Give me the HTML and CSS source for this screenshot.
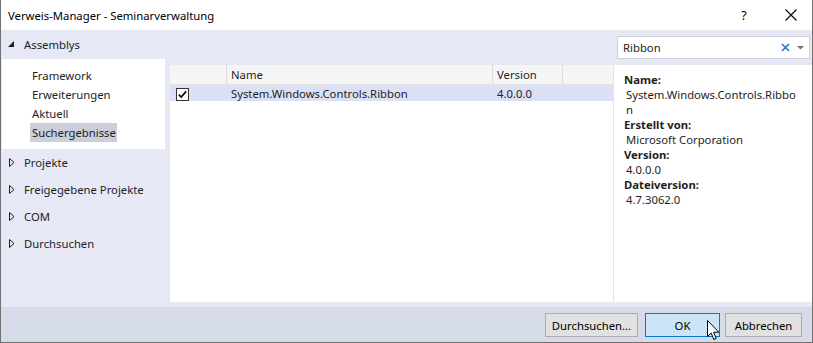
FILE: index.html
```html
<!DOCTYPE html>
<html lang="de">
<head>
<meta charset="utf-8">
<title>Verweis-Manager</title>
<link rel="stylesheet" href="styles.css">
</head>
<body>
<div class="window">
  <div class="titlebar">
    <span class="title">Verweis-Manager - Seminarverwaltung</span>
    <div class="title-btns">
      <span class="help">?</span>
      <svg class="close" width="12" height="12" viewBox="0 0 12 12"><path d="M0.5 0.5 L11.5 11.5 M11.5 0.5 L0.5 11.5" stroke="#000" stroke-width="1.1" fill="none"/></svg>
    </div>
  </div>
  <div class="main">
    <div class="top-row">
      <div class="node expanded">
        <svg class="tri" width="7" height="7" viewBox="0 0 7 7"><path d="M6 0 L6 6 L0 6 Z" fill="#1e1e1e"/></svg>
        <span>Assemblys</span>
      </div>
      <div class="search">
        <span class="search-text">Ribbon</span>
        <svg class="clear" width="9" height="9" viewBox="0 0 9 9"><path d="M1 1 L8 8 M8 1 L1 8" stroke="#1e72d6" stroke-width="1.6" fill="none"/></svg>
        <svg class="drop" width="7" height="4" viewBox="0 0 7 4"><path d="M0 0 L7 0 L3.5 3.5 Z" fill="#717171"/></svg>
      </div>
    </div>
    <div class="content">
      <div class="sidebar">
        <div class="subtree">
          <div class="sub-item">Framework</div>
          <div class="sub-item">Erweiterungen</div>
          <div class="sub-item">Aktuell</div>
          <div class="sub-item selected">Suchergebnisse</div>
        </div>
        <div class="node">
          <svg class="tri" width="6" height="9" viewBox="0 0 6 9"><path d="M0.5 0.5 L5 4.5 L0.5 8.5 Z" fill="none" stroke="#1e1e1e" stroke-width="1"/></svg>
          <span>Projekte</span>
        </div>
        <div class="node">
          <svg class="tri" width="6" height="9" viewBox="0 0 6 9"><path d="M0.5 0.5 L5 4.5 L0.5 8.5 Z" fill="none" stroke="#1e1e1e" stroke-width="1"/></svg>
          <span>Freigegebene Projekte</span>
        </div>
        <div class="node">
          <svg class="tri" width="6" height="9" viewBox="0 0 6 9"><path d="M0.5 0.5 L5 4.5 L0.5 8.5 Z" fill="none" stroke="#1e1e1e" stroke-width="1"/></svg>
          <span>COM</span>
        </div>
        <div class="node">
          <svg class="tri" width="6" height="9" viewBox="0 0 6 9"><path d="M0.5 0.5 L5 4.5 L0.5 8.5 Z" fill="none" stroke="#1e1e1e" stroke-width="1"/></svg>
          <span>Durchsuchen</span>
        </div>
      </div>
      <div class="panel">
        <div class="list">
          <div class="list-head">
            <div class="col c-check"></div>
            <div class="col c-name">Name</div>
            <div class="col c-ver">Version</div>
            <div class="col c-rest"></div>
          </div>
          <div class="list-row">
            <div class="col c-check">
              <svg class="checkbox" width="13" height="13" viewBox="0 0 13 13"><rect x="0.5" y="0.5" width="12" height="12" fill="#fff" stroke="#333"/><path d="M2.8 6.6 L5.2 9 L10.2 3.4" stroke="#000" stroke-width="1.6" fill="none"/></svg>
            </div>
            <div class="col c-name">System.Windows.Controls.Ribbon</div>
            <div class="col c-ver">4.0.0.0</div>
            <div class="col c-rest"></div>
          </div>
        </div>
        <div class="details">
          <div class="label">Name:</div>
          <div class="value">System.Windows.Controls.Ribbo<br>n</div>
          <div class="label">Erstellt von:</div>
          <div class="value">Microsoft Corporation</div>
          <div class="label">Version:</div>
          <div class="value">4.0.0.0</div>
          <div class="label">Dateiversion:</div>
          <div class="value">4.7.3062.0</div>
        </div>
      </div>
    </div>
  </div>
  <div class="footer">
    <button class="btn btn-browse">Durchsuchen...</button>
    <button class="btn btn-ok">OK</button>
    <button class="btn btn-cancel">Abbrechen</button>
  </div>
  <svg class="cursor" width="13" height="21" viewBox="0 0 13 21"><path d="M0.5 0.5 L0.5 16.5 L4.2 13 L6.8 19.5 L9.2 18.5 L6.6 12.2 L11.8 12.2 Z" fill="#fff" stroke="#000" stroke-width="1" stroke-linejoin="miter"/></svg>
</div>
</body>
</html>
```
FILE: styles.css
```css
* { box-sizing: border-box; }
html, body { margin: 0; padding: 0; background: #ffffff; }
body {
  font-family: "Noto Sans", "Open Sans", sans-serif;
  font-size: 11.3px;
  color: #1e1e1e;
  width: 813px;
  height: 343px;
  overflow: hidden;
}
.window {
  position: relative;
  width: 813px;
  height: 343px;
  border-left: 1px solid #707070;
  border-right: 1px solid #707070;
  border-bottom: 1px solid #707070;
  display: flex;
  flex-direction: column;
  background: #e6e9f5;
}
.titlebar {
  height: 30px;
  background: #ffffff;
  display: flex;
  align-items: center;
  justify-content: space-between;
  padding-left: 7px;
  flex: none;
}
.title { font-size: 11.3px; color: #000; }
.title-btns { display: flex; align-items: center; height: 30px; }
.help { font-size: 12.5px; color: #000; width: 46px; text-align: center; margin-right: 1px; }
.close { margin: 0 15px 0 17px; }
.main { flex: 1; display: flex; flex-direction: column; min-height: 0; }
.top-row {
  height: 29px;
  display: flex;
  align-items: center;
  justify-content: space-between;
  flex: none;
}
.node {
  display: flex;
  align-items: center;
  height: 27px;
  padding-left: 8px;
}
.node .tri { margin-right: 9px; flex: none; }
.node.expanded { height: 29px; padding-left: 7px; }
.node.expanded .tri { margin-right: 9px; }
.search {
  width: 193px;
  height: 23px;
  margin-right: 2px;
  margin-top: 6px;
  background: #fff;
  border: 1px solid #cccedb;
  display: flex;
  align-items: center;
  padding-left: 5px;
}
.search-text { flex: 1; color: #1e1e1e; }
.clear { margin-right: 7px; }
.drop { margin-right: 5px; }
.content { flex: 1; display: flex; min-height: 0; }
.sidebar { width: 169px; flex: none; display: flex; flex-direction: column; }
.subtree {
  background: #fff;
  margin-left: 1px;
  width: 163px;
  padding: 7px 0 7px 28px;
}
.sub-item { height: 19px; line-height: 19px; padding-left: 2px; width: fit-content; padding-right: 1px; }
.sub-item.selected { background: #cccedb; }
.panel {
  flex: 1;
  display: flex;
  margin-top: 6px;
  margin-bottom: 5px;
  background: #fff;
}
.list { width: 444px; flex: none; border-right: 1px solid #dfe3ee; }
.list-head { display: flex; height: 20px; background: #f5f5f5; border-bottom: 1px solid #e4e4e4; }
.list-head .col { border-right: 1px solid #dcdcdc; line-height: 19px; }
.list-head .c-rest { border-right: none; }
.list-row { display: flex; height: 16px; background: #dce0f5; align-items: center; }
.col { padding-left: 4px; white-space: nowrap; }
.c-check { width: 57px; padding-left: 6px; display: flex; align-items: center; }
.c-name { width: 266px; }
.c-ver { width: 70px; }
.c-rest { flex: 1; }
.checkbox { display: block; margin-top: 2px; }
.details { flex: 1; padding: 7px 0 0 10px; line-height: 15px; color: #1e1e1e; }
.label { font-weight: bold; }
.value { padding-left: 2px; }
.footer {
  height: 35px;
  flex: none;
  background: #d6dbe9;
  display: flex;
  justify-content: flex-end;
  align-items: flex-start;
  padding: 6px 10px 0 0;
}
.btn {
  font-family: inherit;
  font-size: 11.3px;
  color: #000;
  height: 24px;
  background: #e1e1e1;
  border: 1px solid #adadad;
  padding: 0;
  margin: 0;
}
.btn-browse { width: 93px; margin-right: 7px; }
.btn-ok { width: 75px; margin-right: 5px; background: #cce4f7; border-color: #0078d7; }
.btn-cancel { width: 77px; }
.cursor { position: absolute; left: 706px; top: 320px; }
```
